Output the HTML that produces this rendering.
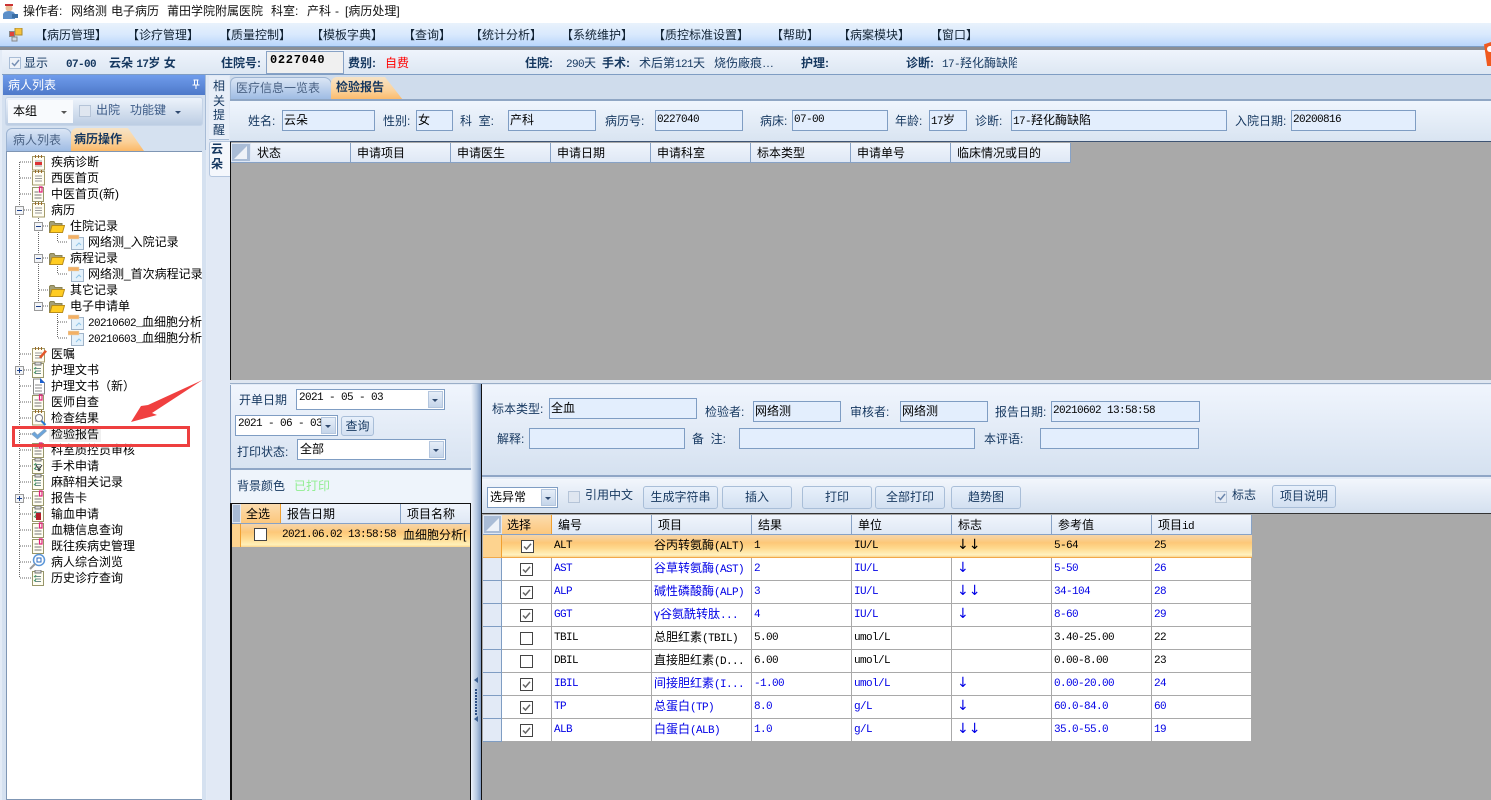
<!DOCTYPE html>
<html lang="zh"><head><meta charset="utf-8"><title>病历处理</title>
<style>
html,body{margin:0;padding:0;width:1491px;height:800px;overflow:hidden;background:#e3ebf6}
body{position:relative;font:12px/16px "Liberation Sans","WenQuanYi Zen Hei","Noto Sans CJK SC",sans-serif;color:#15375f}
.a{position:absolute;box-sizing:border-box}
.t{position:absolute;white-space:nowrap;line-height:16px}
.b{font-weight:bold}
i.m,.m{font:normal 11px/16px "Liberation Mono",monospace;letter-spacing:-.6px}
i.mb{font:bold 11px/16px "Liberation Mono",monospace;letter-spacing:-.6px}
.k{color:#000}
.inp{position:absolute;box-sizing:border-box;border:1px solid #7f9dc3;background:#e3eefd;color:#000;padding:1px 1px 0;white-space:nowrap;overflow:hidden;line-height:16px}
.sel{position:absolute;box-sizing:border-box;border:1px solid #7f9dc3;background:#fff;color:#000;padding:1px 2px 0;white-space:nowrap;line-height:16px}
.sel b{position:absolute;right:1px;top:1px;bottom:1px;width:15px;background:linear-gradient(#e6eef9,#c5d5ea);border:1px solid #b4c6de;box-sizing:border-box}
.sel b:after{content:"";position:absolute;left:3px;top:7px;border:3px solid transparent;border-top:3px solid #304a70;border-bottom:0}
.btn{position:absolute;box-sizing:border-box;border:1px solid #a9bed8;border-radius:3px;background:linear-gradient(#e8f0fb,#d3e0f1);text-align:center;line-height:20px;color:#15375f}
.h{position:absolute;top:0;height:100%;box-sizing:border-box;border-right:1px solid #87a2c6;padding:2px 0 0 6px;color:#000;line-height:16px;white-space:nowrap;overflow:hidden}
.tab{position:absolute;box-sizing:border-box;border:1px solid #9db4d2;border-bottom:0;border-radius:6px 8px 0 0;text-align:left;white-space:nowrap}
.tn{background:linear-gradient(#dbe6f5,#9fbce4);color:#4a6284}
.ts{background:linear-gradient(#f6e3c6,#fbd199 60%,#fbb868);color:#15375f;font-weight:bold;clip-path:polygon(0 0,78% 0,100% 100%,0 100%)}
table{position:absolute;border-collapse:separate;border-spacing:0;table-layout:fixed;background:#fff}
td{box-sizing:border-box;padding:0 0 0 2px;border-right:1px solid #a9a9a9;border-bottom:1px solid #a9a9a9;line-height:16px;white-space:nowrap;overflow:hidden;color:#000;height:23px}
td.rh{background:#e2eaf6;border-right:1px solid #7f9dc3;border-bottom:1px solid #7f9dc3;padding:0}
td.c{padding:0;text-align:center}
td svg{display:block;margin:auto}
tr.bl td{color:#0000e6}
tr.s td{background:linear-gradient(#f5d5aa 0,#fdc878 35%,#ffd98e 60%,#fff2c0 90%,#fbd58e 100%);border-right:0;border-bottom:1px solid #f0a94c}
tr.s td.rh{background:#fdd38f;border-right:1px solid #f0a030}
.ar{font:14px/16px "DejaVu Sans",sans-serif;letter-spacing:0;padding-left:3px}
svg text{font-size:12px;fill:#000;font-family:"Liberation Sans","WenQuanYi Zen Hei","Noto Sans CJK SC",sans-serif}
svg .m{font-size:11px;letter-spacing:-.6px;font-family:"Liberation Mono",monospace}
.dl{stroke:#666;stroke-width:1;stroke-dasharray:1 1;fill:none}
</style></head><body>
<svg width="0" height="0" style="position:absolute">
<symbol id="ck" viewBox="0 0 13 13"><rect x=".5" y=".5" width="12" height="12" fill="#fff" stroke="#444"/><path d="M3 6.500l2.500 2.500L10 3.800" fill="none" stroke="#666" stroke-width="1.500"/></symbol>
<symbol id="un" viewBox="0 0 13 13"><rect x=".5" y=".5" width="12" height="12" fill="#fff" stroke="#444"/></symbol>
<symbol id="nb" viewBox="0 0 14 16"><rect x=".5" y="1.500" width="12" height="13.500" fill="#fffdf2" stroke="#a49b6a"/><path d="M3.500 0v3M6.500 0v3M9.500 0v3" stroke="#9a6a2a"/><path d="M3 6h7M3 8.500h7M3 11h7" stroke="#999"/></symbol>
<symbol id="cl" viewBox="0 0 14 16"><rect x=".5" y="1.500" width="11" height="14" fill="#fffdf2" stroke="#98966a"/><path d="M2.500 6h4M2.500 9h7M2.500 12h7" stroke="#777"/><path d="M7.500 1v5h2.500V1z" fill="none" stroke="#e0207a" stroke-width="1.200"/></symbol>
<symbol id="fo" viewBox="0 0 16 13"><path d="M.5 2.500V12.500H13V3.500H6L5 1.500H1.500z" fill="#a5a077" stroke="#8a8355"/><path d="M3 5.500H15.500L13.500 12.500H1z" fill="#ffcc22" stroke="#b88d1c"/></symbol>
<symbol id="fi" viewBox="0 0 16 16"><path d="M3.500 3.500H15.500V15.500H3.500z" fill="#e4f1fb" stroke="#9fb3c8"/><rect x="0" y="1" width="11" height="4" fill="#f3b065" stroke="#e2d6be" stroke-width=".5"/><path d="M8 12l3-3 2 2" fill="none" stroke="#8fc5e8"/></symbol>
<symbol id="cp" viewBox="0 0 14 16"><rect x=".5" y="1.500" width="11" height="14" fill="#fffdf2" stroke="#98966a"/><rect x="3" y="0" width="6" height="3" fill="#ddd" stroke="#777"/><path d="M3 6.500h6M3 9h6M3 11.500h6" stroke="#6e8a8a"/><path d="M2 6l1 1 1-2M2 10l1 1 1-2" fill="none" stroke="#4a9a6a"/></symbol>
</svg>

<!-- title bar -->
<div class="a" style="left:0;top:0;width:1491px;height:23px;background:#fff"></div>
<svg class="a" style="left:2px;top:3px" width="17" height="17"><circle cx="7" cy="5" r="3.500" fill="#e8c09a"/><path d="M3 3h8v-2H3z" fill="#c33"/><path d="M1 16v-5q1-3 6-3t6 3v5z" fill="#5c8fc8"/><rect x="10" y="11" width="6" height="4" fill="#3a6ea5"/></svg>
<div class="t" style="left:23px;top:3px;color:#111">操作者:</div>
<div class="t" style="left:71px;top:3px;color:#111">网络测</div>
<div class="t" style="left:111px;top:3px;color:#111">电子病历</div>
<div class="t" style="left:167px;top:3px;color:#111">莆田学院附属医院</div>
<div class="t" style="left:271px;top:3px;color:#111">科室:</div>
<div class="t" style="left:307px;top:3px;color:#111">产科</div>
<div class="t" style="left:335px;top:3px;color:#111">-</div>
<div class="t" style="left:345px;top:3px;color:#111">[病历处理]</div>

<!-- menu -->
<div class="a" style="left:0;top:23px;width:1491px;height:24px;background:linear-gradient(#e9f2fc,#d9e9fd 50%,#b9d6fb);border-bottom:1px solid #7d9ec6"></div>
<svg class="a" style="left:9px;top:28px" width="14" height="14"><rect x="6" y="0" width="7" height="7" fill="#f6c23c" stroke="#a98a30"/><rect x="0.500" y="3.500" width="5" height="5" fill="#e0433a" stroke="#888"/><rect x="3" y="9" width="5" height="4" fill="#cfd8e4" stroke="#888"/></svg>
<div class="t" style="left:35px;top:27px;color:#123">【病历管理】</div>
<div class="t" style="left:127px;top:27px;color:#123">【诊疗管理】</div>
<div class="t" style="left:219px;top:27px;color:#123">【质量控制】</div>
<div class="t" style="left:311px;top:27px;color:#123">【模板字典】</div>
<div class="t" style="left:403px;top:27px;color:#123">【查询】</div>
<div class="t" style="left:470px;top:27px;color:#123">【统计分析】</div>
<div class="t" style="left:561px;top:27px;color:#123">【系统维护】</div>
<div class="t" style="left:653px;top:27px;color:#123">【质控标准设置】</div>
<div class="t" style="left:771px;top:27px;color:#123">【帮助】</div>
<div class="t" style="left:838px;top:27px;color:#123">【病案模块】</div>
<div class="t" style="left:930px;top:27px;color:#123">【窗口】</div>
<div class="a" style="left:0;top:47px;width:1491px;height:3px;background:#8a8f96"></div>

<!-- patient info strip -->
<div class="a" style="left:2px;top:50px;width:1489px;height:25px;background:linear-gradient(#eff4fc,#dde7f3);border-bottom:1px solid #7f9dc3"></div>
<div class="a" style="left:9px;top:57px;width:12px;height:12px;border:1px solid #a9bdd6;background:#eef2f8"></div>
<svg class="a" style="left:11px;top:59px" width="9" height="9"><path d="M1 4l2.500 2.500L8 1" fill="none" stroke="#7790b4" stroke-width="1.500"/></svg>
<div class="t" style="left:24px;top:55px">显示</div>
<div class="t" style="left:66px;top:55px"><i class="mb">07-00</i></div>
<div class="t b" style="left:109px;top:55px">云朵 <i class="mb">17</i>岁 女</div>
<div class="t b" style="left:221px;top:55px">住院号:</div>
<div class="a" style="left:266px;top:51px;width:78px;height:23px;background:#f0f0f0;border:1px solid #88a2c5"></div>
<div class="t b" style="left:270px;top:52px;color:#000;font:bold 12px/16px 'Liberation Mono',monospace;letter-spacing:.7px">0227040</div>
<div class="t b" style="left:348px;top:55px">费别:</div>
<div class="t" style="left:385px;top:55px;color:#f00">自费</div>
<div class="t b" style="left:525px;top:55px">住院:</div>
<div class="t" style="left:566px;top:55px"><i class="m">290</i>天</div>
<div class="t b" style="left:602px;top:55px">手术:</div>
<div class="t" style="left:639px;top:55px">术后第<i class="m">121</i>天</div>
<div class="t" style="left:714px;top:55px">烧伤廠痕…</div>
<div class="t b" style="left:801px;top:55px">护理:</div>
<div class="t b" style="left:906px;top:55px">诊断:</div>
<div class="t" style="left:942px;top:55px;width:75px;overflow:hidden"><i class="m">17-</i>羟化酶缺陷</div>
<div class="a" style="left:1484px;top:42px;width:7px;height:24px;background:#f0591e;clip-path:polygon(0 10%,100% 0,100% 100%,45% 100%)"></div>
<div class="a" style="left:1487px;top:46px;width:4px;height:6px;background:#fff;border-radius:3px 0 0 3px"></div>

<!-- left pane -->
<div class="a" style="left:2px;top:75px;width:204px;height:725px;background:#d5e1f0;border-right:1px solid #a8bcd6"></div>
<div class="a" style="left:3px;top:75px;width:202px;height:20px;background:linear-gradient(#6f9cec,#4e79c9)"></div>
<div class="t" style="left:8px;top:77px;color:#fff">病人列表</div>
<svg class="a" style="left:191px;top:79px" width="10" height="11"><path d="M2.500 1h5M3.500 1v5M6.500 1v5M1.500 6h7M5 6v4" stroke="#fff" fill="none"/></svg>
<div class="a" style="left:5px;top:97px;width:198px;height:29px;border:1px solid #c5d4e8;border-radius:3px;background:linear-gradient(#edf3fb,#bccde3)"></div>
<div class="a" style="left:8px;top:100px;width:65px;height:23px;background:#f8fafd"></div>
<div class="t k" style="left:13px;top:103px">本组</div>
<div class="a" style="left:61px;top:111px;border:3px solid transparent;border-top:3px solid #555;border-bottom:0"></div>
<div class="a" style="left:79px;top:105px;width:12px;height:12px;border:1px solid #b5c4d8;background:#dfe6f0"></div>
<div class="t" style="left:96px;top:102px;color:#3b5a86">出院</div>
<div class="t" style="left:130px;top:102px;color:#3b5a86">功能键</div>
<div class="a" style="left:175px;top:111px;border:3px solid transparent;border-top:3px solid #304a70;border-bottom:0"></div>
<div class="tab tn" style="left:6px;top:128px;width:66px;height:23px;padding:3px 0 0 6px">病人列表</div>
<div class="tab ts" style="left:71px;top:128px;width:73px;height:23px;padding:3px 0 0 3px;border:0">病历操作</div>
<div class="a" style="left:6px;top:151px;width:197px;height:649px;background:#fff;border:1px solid #7f96b4"></div>

<svg class="a" style="left:0;top:150px" width="205" height="650" viewBox="0 150 205 650">
<path class="dl" d="M19.500 162V578M20 162H32M20 178H32M20 194H32M20 210H32M20 354H32M20 370H32M20 386H32M20 402H32M20 418H32M20 434H32M20 450H32M20 466H32M20 482H32M20 498H32M20 514H32M20 530H32M20 546H32M20 562H32M20 578H32M38.500 210V306M39 226H50M39 258H50M39 290H50M39 306H50M57.500 226V242M58 242H68M57.500 258V274M58 274H68M57.500 306V338M58 322H68M58 338H68"/>
<g fill="#f2f4f7" stroke="#9a9a9a"><rect x="15.500" y="206.500" width="8" height="8"/><rect x="34.500" y="222.500" width="8" height="8"/><rect x="34.500" y="254.500" width="8" height="8"/><rect x="34.500" y="302.500" width="8" height="8"/><rect x="15.500" y="366.500" width="8" height="8"/><rect x="15.500" y="494.500" width="8" height="8"/></g>
<path d="M17 210.500h5M36 226.500h5M36 258.500h5M36 306.500h5M17 370.500h5M19.500 368v5M17 498.500h5M19.500 496v5" stroke="#1c3f8a"/>
<use href="#nb" x="32" y="155" width="14" height="16"/>
<path d="M35 162h7v3h-7z" fill="#d33"/>
<use href="#nb" x="31" y="170" width="16" height="16"/>
<use href="#cl" x="32" y="186" width="14" height="16"/>
<use href="#nb" x="32" y="202" width="14" height="16"/>
<use href="#fo" x="49" y="220" width="16" height="13"/>
<use href="#fi" x="68" y="234" width="16" height="16"/>
<use href="#fo" x="49" y="252" width="16" height="13"/>
<use href="#fi" x="68" y="266" width="16" height="16"/>
<use href="#fo" x="49" y="284" width="16" height="13"/>
<use href="#fo" x="49" y="300" width="16" height="13"/>
<use href="#fi" x="68" y="314" width="16" height="16"/>
<use href="#fi" x="68" y="330" width="16" height="16"/>
<use href="#nb" x="32" y="347" width="14" height="16"/>
<path d="M39 357l6-7 2 1.500-6 7z" fill="#e2562a"/>
<use href="#cp" x="32" y="362" width="14" height="16"/>
<path d="M33.500 379h7l4 4v11h-11z" fill="#fff" stroke="#888"/><path d="M40 378l5 5h-5z" fill="#1a5fd0"/><path d="M35 385h7M35 388h7M35 391h7" stroke="#888"/>
<use href="#cl" x="32" y="394" width="14" height="16"/>
<use href="#nb" x="32" y="410" width="14" height="16"/><circle cx="39" cy="418" r="3.500" fill="#fff" stroke="#778"/><path d="M41.500 421l4 4" stroke="#2a7ad0" stroke-width="2"/>
<path d="M31.500 434l3-2 3 3 7-6 2 2-9 8z" fill="#6aa4dc" stroke="#8aa4bc" stroke-width=".7"/>
<use href="#cl" x="32" y="442" width="14" height="16"/>
<use href="#cp" x="32" y="458" width="14" height="16"/><path d="M36 465l4 6M42 465l-4 6" stroke="#333"/>
<use href="#cp" x="32" y="474" width="14" height="16"/>
<use href="#cl" x="32" y="490" width="14" height="16"/>
<use href="#cp" x="32" y="506" width="14" height="16"/><rect x="36" y="513" width="5" height="7" fill="#b5202a"/>
<use href="#cl" x="32" y="522" width="14" height="16"/>
<use href="#cl" x="32" y="538" width="14" height="16"/>
<circle cx="39" cy="560" r="5.500" fill="#fff" stroke="#5a96d8" stroke-width="1.500"/><path d="M35 564l-5 5" stroke="#999" stroke-width="2"/><rect x="37" y="558" width="4" height="4" fill="none" stroke="#2a6ac0"/>
<use href="#cp" x="32" y="570" width="14" height="16"/>
<rect x="49" y="427" width="52" height="15" fill="#f0f0f0"/>
<g transform="translate(0,-1)">
<text x="51" y="167">疾病诊断</text><text x="51" y="183">西医首页</text><text x="51" y="199">中医首页(新)</text><text x="51" y="215">病历</text>
<text x="70" y="231">住院记录</text><text x="88" y="247">网络测_入院记录</text><text x="70" y="263">病程记录</text><text x="88" y="279">网络测_首次病程记录</text>
<text x="70" y="295">其它记录</text><text x="70" y="311">电子申请单</text>
<text x="88" y="327"><tspan class="m">20210602_</tspan>血细胞分析</text><text x="88" y="343"><tspan class="m">20210603_</tspan>血细胞分析</text>
<text x="51" y="359">医嘱</text><text x="51" y="375">护理文书</text><text x="51" y="391">护理文书（新）</text><text x="51" y="407">医师自查</text><text x="51" y="423">检查结果</text><text x="51" y="439">检验报告</text>
<text x="51" y="455">科室质控员审核</text><text x="51" y="471">手术申请</text><text x="51" y="487">麻醉相关记录</text><text x="51" y="503">报告卡</text><text x="51" y="519">输血申请</text><text x="51" y="535">血糖信息查询</text><text x="51" y="551">既往疾病史管理</text><text x="51" y="567">病人综合浏览</text><text x="51" y="583">历史诊疗查询</text>
</g>
</svg>
<div class="a" style="left:202px;top:150px;width:4px;height:650px;background:#d5e1f0"></div>
<div class="a" style="left:12px;top:426px;width:178px;height:21px;border:3px solid #ee3f3f"></div>
<svg class="a" style="left:120px;top:370px" width="90" height="60"><polygon points="82.500,10 28,35 21,36 11,52 37,45 32,43" fill="#f04040"/></svg>

<!-- side strip -->
<div class="a" style="left:207px;top:75px;width:23px;height:725px;background:#e1e9f5"></div>
<div class="a" style="left:209px;top:76px;width:20px;height:64px;background:#e7eef8;border-bottom:1px solid #a9bdd6"></div>
<div class="t" style="left:213px;top:79px;width:14px;white-space:normal;line-height:14.500px">相关提醒</div>
<div class="a" style="left:209px;top:141px;width:21px;height:36px;background:#f4f7fc;border:1px solid #b4c6de;border-right:0;border-radius:3px 0 0 3px"></div>
<div class="t b" style="left:211px;top:142px;width:14px;white-space:normal;line-height:15px">云朵</div>

<!-- right upper -->
<div class="a" style="left:230px;top:75px;width:1261px;height:26px;background:#cfdcec"></div>
<div class="tab tn" style="left:230px;top:77px;width:102px;height:22px;padding:2px 0 0 5px">医疗信息一览表</div>
<div class="tab ts" style="left:331px;top:77px;width:72px;height:23px;padding:2px 0 0 5px;border:0;clip-path:polygon(0 0,75% 0,100% 100%,0 100%)">检验报告</div>
<div class="a" style="left:230px;top:99px;width:1261px;height:2px;background:#8fa6c4"></div>
<div class="a" style="left:230px;top:101px;width:1261px;height:41px;background:linear-gradient(#eff5fd,#d9e4f1);border-bottom:1px solid #3e5473"></div>
<div class="t" style="left:248px;top:113px">姓名:</div><div class="inp" style="left:282px;top:110px;width:93px;height:21px">云朵</div>
<div class="t" style="left:383px;top:113px">性别:</div><div class="inp" style="left:416px;top:110px;width:37px;height:21px">女</div>
<div class="t" style="left:460px;top:113px">科&nbsp; 室:</div><div class="inp" style="left:508px;top:110px;width:88px;height:21px">产科</div>
<div class="t" style="left:605px;top:113px">病历号:</div><div class="inp m" style="left:655px;top:110px;width:88px;height:21px">0227040</div>
<div class="t" style="left:760px;top:113px">病床:</div><div class="inp m" style="left:792px;top:110px;width:96px;height:21px">07-00</div>
<div class="t" style="left:895px;top:113px">年龄:</div><div class="inp" style="left:929px;top:110px;width:38px;height:21px"><i class="m">17</i>岁</div>
<div class="t" style="left:975px;top:113px">诊断:</div><div class="inp" style="left:1011px;top:110px;width:216px;height:21px"><i class="m">17-</i>羟化酶缺陷</div>
<div class="t" style="left:1235px;top:113px">入院日期:</div><div class="inp m" style="left:1291px;top:110px;width:125px;height:21px">20200816</div>

<!-- upper grid -->
<div class="a" style="left:230px;top:142px;width:1261px;height:238px;background:#a9a9a9;border-left:1px solid #111"></div>
<div class="a" style="left:231px;top:143px;width:840px;height:20px;background:linear-gradient(#f0f5fc,#dfe8f5);border-bottom:1px solid #87a2c6">
<div class="h" style="left:0;width:20px;padding:0;background:#a9bcd6;border:1px solid #dfe8f5"><svg width="17" height="17"><path d="M2 15L15 2V15z" fill="#eef2f8"/></svg></div>
<div class="h" style="left:20px;width:100px">状态</div><div class="h" style="left:120px;width:100px">申请项目</div><div class="h" style="left:220px;width:100px">申请医生</div><div class="h" style="left:320px;width:100px">申请日期</div><div class="h" style="left:420px;width:100px">申请科室</div><div class="h" style="left:520px;width:100px">标本类型</div><div class="h" style="left:620px;width:100px">申请单号</div><div class="h" style="left:720px;width:120px">临床情况或目的</div>
</div>
<div class="a" style="left:230px;top:380px;width:1261px;height:4px;background:#dfe6f0;border-bottom:1px solid #9aaec8"></div>

<!-- lower left -->
<div class="a" style="left:230px;top:385px;width:241px;height:415px;background:#eef4fb;border-left:1px solid #8aa2c2"></div>
<div class="a" style="left:231px;top:385px;width:240px;height:85px;background:linear-gradient(#f0f5fd,#d8e3f1);border-bottom:2px solid #8fa6c6"></div>
<div class="t" style="left:239px;top:392px">开单日期</div>
<div class="sel m" style="left:296px;top:389px;width:149px;height:21px;line-height:15px">2021 - 05 - 03<b></b></div>
<div class="sel m" style="left:235px;top:415px;width:103px;height:21px;line-height:15px">2021 - 06 - 03<b></b></div>
<div class="btn" style="left:341px;top:416px;width:33px;height:20px;line-height:18px">查询</div>
<div class="t" style="left:237px;top:444px">打印状态:</div>
<div class="sel" style="left:297px;top:439px;width:149px;height:21px">全部<b></b></div>
<div class="t" style="left:237px;top:478px">背景颜色</div>
<div class="t" style="left:294px;top:478px;color:#90ee90">已打印</div>
<div class="a" style="left:230px;top:503px;width:241px;height:297px;background:#a9a9a9;border-left:2px solid #111;border-top:1px solid #111;border-right:1px solid #111"></div>
<div class="a" style="left:232px;top:504px;width:238px;height:20px;background:linear-gradient(#f0f5fc,#dfe8f5);border-bottom:1px solid #87a2c6;overflow:hidden">
<div class="h" style="left:0;width:9px;padding:0;background:#a9bcd6;border:1px solid #dfe8f5"></div>
<div class="h" style="left:9px;width:40px;padding-left:5px;background:linear-gradient(#fbdcae,#fcc77c);border-right:1px solid #f0a030">全选</div>
<div class="h" style="left:49px;width:120px">报告日期</div><div class="h" style="left:169px;width:70px;border:0">项目名称</div>
</div>
<div class="a" style="left:232px;top:524px;width:238px;height:23px;background:linear-gradient(#f5d5aa,#fdc878 35%,#ffd98e 60%,#fff0b8 90%,#fbd58e)"></div>
<div class="a" style="left:232px;top:524px;width:9px;height:23px;background:#fdd38f;border-right:1px solid #f0a030"></div>
<svg class="a" style="left:254px;top:528px" width="13" height="13"><use href="#un"/></svg>
<div class="t k m" style="left:282px;top:527px">2021.06.02 13:58:58</div>
<div class="t k" style="left:403px;top:527px;width:67px;overflow:hidden">血细胞分析[</div>

<!-- splitter -->
<div class="a" style="left:471px;top:384px;width:10px;height:416px;background:linear-gradient(90deg,#eef3fa,#b8cae2 55%,#7f9bc2)"></div>
<div class="a" style="left:481px;top:384px;width:1px;height:416px;background:#111"></div>
<svg class="a" style="left:472px;top:676px" width="8" height="50"><path d="M6 1v6L2 4zM6 40v6L2 43z" fill="#3b5f92"/><path d="M4 13v26" stroke="#2d4f86" stroke-dasharray="2 1" stroke-width="2"/></svg>

<!-- lower right -->
<div class="a" style="left:482px;top:385px;width:1009px;height:92px;background:linear-gradient(#f0f5fd,#d5e1f0);border-bottom:2px solid #8fa6c6"></div>
<div class="t" style="left:492px;top:401px">标本类型:</div><div class="inp" style="left:549px;top:398px;width:148px;height:21px">全血</div>
<div class="t" style="left:705px;top:404px">检验者:</div><div class="inp" style="left:753px;top:401px;width:88px;height:21px">网络测</div>
<div class="t" style="left:850px;top:404px">审核者:</div><div class="inp" style="left:900px;top:401px;width:88px;height:21px">网络测</div>
<div class="t" style="left:995px;top:404px">报告日期:</div><div class="inp m" style="left:1051px;top:401px;width:149px;height:21px">20210602 13:58:58</div>
<div class="t" style="left:497px;top:431px">解释:</div><div class="inp" style="left:529px;top:428px;width:156px;height:21px"></div>
<div class="t" style="left:692px;top:431px">备&nbsp; 注:</div><div class="inp" style="left:739px;top:428px;width:236px;height:21px"></div>
<div class="t" style="left:984px;top:431px">本评语:</div><div class="inp" style="left:1040px;top:428px;width:159px;height:21px"></div>

<div class="a" style="left:482px;top:479px;width:1009px;height:35px;background:linear-gradient(#f2f6fc,#d4e0ef);border-bottom:1px solid #333"></div>
<div class="sel" style="left:487px;top:487px;width:71px;height:21px">选异常<b></b></div>
<div class="a" style="left:568px;top:491px;width:12px;height:12px;border:1px solid #b5c4d8;background:#dfe6f0"></div>
<div class="t" style="left:585px;top:487px">引用中文</div>
<div class="btn" style="left:643px;top:486px;width:75px;height:23px">生成字符串</div>
<div class="btn" style="left:722px;top:486px;width:70px;height:23px">插入</div>
<div class="btn" style="left:802px;top:486px;width:70px;height:23px">打印</div>
<div class="btn" style="left:875px;top:486px;width:70px;height:23px">全部打印</div>
<div class="btn" style="left:951px;top:486px;width:70px;height:23px">趋势图</div>
<div class="a" style="left:1215px;top:491px;width:12px;height:12px;border:1px solid #b5c4d8;background:#e6ecf5"></div>
<svg class="a" style="left:1217px;top:493px" width="9" height="9"><path d="M1 4l2.500 2.500L8 1" fill="none" stroke="#6b86ad" stroke-width="1.500"/></svg>
<div class="t" style="left:1232px;top:487px">标志</div>
<div class="btn" style="left:1272px;top:485px;width:64px;height:23px">项目说明</div>

<!-- lower grid -->
<div class="a" style="left:482px;top:514px;width:1009px;height:286px;background:#a9a9a9"></div>
<div class="a" style="left:483px;top:515px;width:769px;height:20px;background:linear-gradient(#f0f5fc,#dfe8f5);border-bottom:1px solid #87a2c6">
<div class="h" style="left:0;width:19px;padding:0;background:#a9bcd6;border:1px solid #dfe8f5"><svg width="17" height="17"><path d="M2 15L15 2V15z" fill="#eef2f8"/></svg></div>
<div class="h" style="left:19px;width:50px;padding-left:5px;background:linear-gradient(#fbdcae,#fcc77c);border-right:1px solid #f0a030">选择</div>
<div class="h" style="left:69px;width:100px">编号</div><div class="h" style="left:169px;width:100px">项目</div><div class="h" style="left:269px;width:100px">结果</div><div class="h" style="left:369px;width:100px">单位</div><div class="h" style="left:469px;width:100px">标志</div><div class="h" style="left:569px;width:100px">参考值</div><div class="h" style="left:669px;width:100px"><span>项目</span><i class="m">id</i></div>
</div>
<table style="left:483px;top:535px;width:769px">
<colgroup><col style="width:19px"><col style="width:50px"><col style="width:100px"><col style="width:100px"><col style="width:100px"><col style="width:100px"><col style="width:100px"><col style="width:100px"><col style="width:100px"></colgroup>
<tr class="s"><td class="rh"></td><td class="c"><svg width="13" height="13"><use href="#ck"/></svg></td><td class="m">ALT</td><td>谷丙转氨酶<i class="m">(ALT)</i></td><td class="m">1</td><td class="m">IU/L</td><td class="m"><span class="ar">↓↓</span></td><td class="m">5-64</td><td class="m">25</td></tr>
<tr class="bl"><td class="rh"></td><td class="c"><svg width="13" height="13"><use href="#ck"/></svg></td><td class="m">AST</td><td>谷草转氨酶<i class="m">(AST)</i></td><td class="m">2</td><td class="m">IU/L</td><td class="m"><span class="ar">↓</span></td><td class="m">5-50</td><td class="m">26</td></tr>
<tr class="bl"><td class="rh"></td><td class="c"><svg width="13" height="13"><use href="#ck"/></svg></td><td class="m">ALP</td><td>碱性磷酸酶<i class="m">(ALP)</i></td><td class="m">3</td><td class="m">IU/L</td><td class="m"><span class="ar">↓↓</span></td><td class="m">34-104</td><td class="m">28</td></tr>
<tr class="bl"><td class="rh"></td><td class="c"><svg width="13" height="13"><use href="#ck"/></svg></td><td class="m">GGT</td><td>γ谷氨酰转肽<i class="m">...</i></td><td class="m">4</td><td class="m">IU/L</td><td class="m"><span class="ar">↓</span></td><td class="m">8-60</td><td class="m">29</td></tr>
<tr><td class="rh"></td><td class="c"><svg width="13" height="13"><use href="#un"/></svg></td><td class="m">TBIL</td><td>总胆红素<i class="m">(TBIL)</i></td><td class="m">5.00</td><td class="m">umol/L</td><td class="m"></td><td class="m">3.40-25.00</td><td class="m">22</td></tr>
<tr><td class="rh"></td><td class="c"><svg width="13" height="13"><use href="#un"/></svg></td><td class="m">DBIL</td><td>直接胆红素<i class="m">(D...</i></td><td class="m">6.00</td><td class="m">umol/L</td><td class="m"></td><td class="m">0.00-8.00</td><td class="m">23</td></tr>
<tr class="bl"><td class="rh"></td><td class="c"><svg width="13" height="13"><use href="#ck"/></svg></td><td class="m">IBIL</td><td>间接胆红素<i class="m">(I...</i></td><td class="m">-1.00</td><td class="m">umol/L</td><td class="m"><span class="ar">↓</span></td><td class="m">0.00-20.00</td><td class="m">24</td></tr>
<tr class="bl"><td class="rh"></td><td class="c"><svg width="13" height="13"><use href="#ck"/></svg></td><td class="m">TP</td><td>总蛋白<i class="m">(TP)</i></td><td class="m">8.0</td><td class="m">g/L</td><td class="m"><span class="ar">↓</span></td><td class="m">60.0-84.0</td><td class="m">60</td></tr>
<tr class="bl"><td class="rh"></td><td class="c"><svg width="13" height="13"><use href="#ck"/></svg></td><td class="m">ALB</td><td>白蛋白<i class="m">(ALB)</i></td><td class="m">1.0</td><td class="m">g/L</td><td class="m"><span class="ar">↓↓</span></td><td class="m">35.0-55.0</td><td class="m">19</td></tr>
</table>
</body></html>
